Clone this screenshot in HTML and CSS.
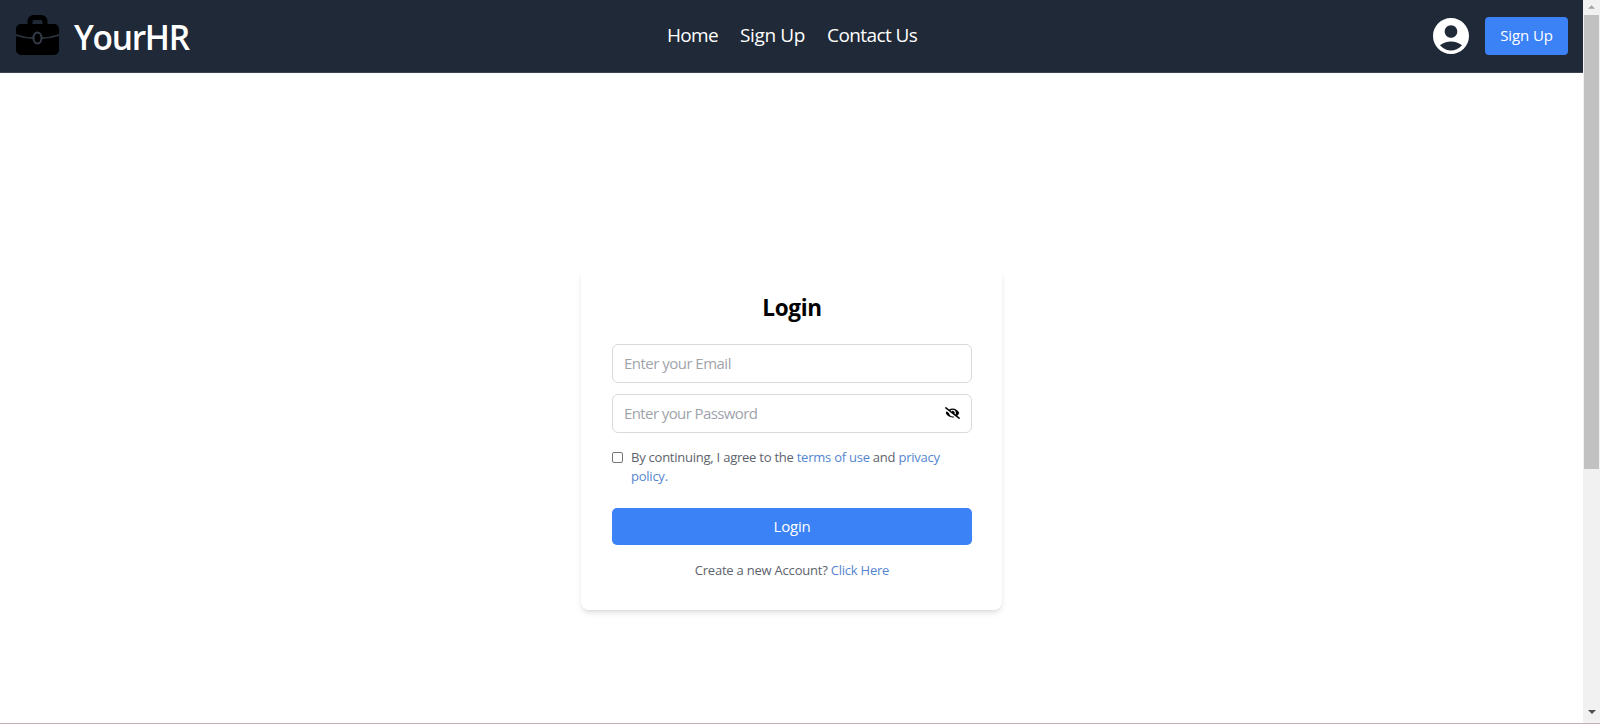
FILE: index.html
```html
<!DOCTYPE html>
<html lang="en">
<head>
<meta charset="utf-8">
<title>YourHR</title>
<link rel="stylesheet" href="styles.css">
</head>
<body>
<div class="page">
  <header class="header">
    <div class="brand">
      <svg class="brand-icon" viewBox="0 0 43 40">
        <path fill="#000" fill-rule="evenodd" d="M11.500 9V6a6 6 0 0 1 6-6h8a6 6 0 0 1 6 6v3H38a5 5 0 0 1 5 5v21a5 5 0 0 1-5 5H5a5 5 0 0 1-5-5V14a5 5 0 0 1 5-5zM16.500 9h10V6.500a1.500 1.500 0 0 0-1.500-1.500h-7a1.500 1.500 0 0 0-1.500 1.500z"/>
        <path fill="none" stroke="#2b333e" stroke-width="1.700" d="M0 20q9 3 17.500 3.200M43 20q-9 3-17.500 3.200"/>
        <ellipse cx="21.500" cy="23" rx="4" ry="5.500" fill="#000" stroke="#343d49" stroke-width="2"/>
      </svg>
      <span class="brand-name">YourHR</span>
    </div>
    <nav class="nav">
      <a class="nav-home">Home</a>
      <a class="nav-signup">Sign Up</a>
      <a class="nav-contact">Contact Us</a>
    </nav>
    <div class="account">
      <svg class="avatar" viewBox="2 2 20 20"><path fill="#fff" d="M12 2C6.480 2 2 6.480 2 12s4.480 10 10 10 10-4.480 10-10S17.520 2 12 2zm0 4c1.930 0 3.500 1.570 3.500 3.500S13.930 13 12 13s-3.500-1.570-3.500-3.500S10.070 6 12 6zm0 14c-2.030 0-4.430-.820-6.140-2.880C7.550 15.800 9.680 15 12 15s4.450.800 6.140 2.120C16.430 19.180 14.030 20 12 20z"/></svg>
      <button class="signup"><span>Sign Up</span></button>
    </div>
  </header>
  <main class="main">
    <form class="card">
      <h2 class="title">Login</h2>
      <div class="field"><span class="placeholder-email">Enter your Email</span></div>
      <div class="field">
        <span class="placeholder-password">Enter your Password</span>
        <svg class="eye" viewBox="0 0 640 512"><path d="M320 400c-75.870 0-137.250-58.710-142.900-133.110L72.200 185.820c-13.790 17.300-26.480 35.590-36.720 55.590a32.350 32.350 0 0 0 0 29.190C89.710 376.410 197.070 448 320 448c26.910 0 52.870-4 77.890-10.460L346 397.390a144.130 144.130 0 0 1-26 2.610zm313.820 58.100l-110.550-85.440a331.250 331.250 0 0 0 81.250-102.070 32.350 32.350 0 0 0 0-29.190C550.290 135.590 442.930 64 320 64a308.150 308.150 0 0 0-147.320 37.700L45.460 3.370A16 16 0 0 0 23 6.180L3.370 31.450A16 16 0 0 0 6.180 53.900l588.360 454.730a16 16 0 0 0 22.460-2.810l19.640-25.270a16 16 0 0 0-2.820-22.450zm-183.720-142l-39.300-30.380A94.750 94.750 0 0 0 416 256a94.760 94.760 0 0 0-121.310-92.210A47.650 47.650 0 0 1 304 192a46.640 46.640 0 0 1-1.540 10l-73.610-56.890A142.310 142.310 0 0 1 320 112a143.920 143.920 0 0 1 144 144c0 21.630-5.290 41.790-13.900 60.110z"/></svg>
      </div>
      <div class="agree">
        <span class="checkbox"></span>
        <p><span class="terms-line">By continuing, I agree to the <a>terms of use</a> and <a>privacy</a></span><br><span class="policy"><a>policy.</a></span></p>
      </div>
      <button class="submit"><span>Login</span></button>
      <p class="create">Create a new Account? <a>Click Here</a></p>
    </form>
  </main>
</div>
<aside class="scrollbar">
  <svg class="arrow" viewBox="0 0 8 4"><path fill="#a3a3a3" d="M0 4 4 0l4 4z"/></svg>
  <div class="thumb"></div>
  <svg class="arrow arrow-down" viewBox="0 0 8 4"><path fill="#505050" d="M0 0h8L4 4z"/></svg>
</aside>
</body>
</html>
```
FILE: styles.css
```css
* { box-sizing: border-box; margin: 0; }
body {
  width: 1600px; height: 724px; display: grid; grid-template-columns: 1583px 17px;
  overflow: hidden; border-bottom: 1px solid #c5adb2; background: #fff;
  font-family: "Open Sans", "Noto Sans", sans-serif; color: #000;
}
.page { display: flex; flex-direction: column; }
.header {
  height: 73px; padding: 0 15px 0 16px; background: #1f2937; color: #fff;
  display: grid; grid-template-columns: 651px 1fr auto; align-items: start;
  border-bottom: 1px solid #3c434d;
}
.brand { display: flex; gap: 15px; padding-top: 15px; }
.brand-icon { width: 43px; height: 40px; }
.brand-name { font-size: 33.500px; font-weight: 600; line-height: 44px; letter-spacing: -1.3px; white-space: nowrap; }
.nav { display: flex; gap: 22px; padding-top: 21px; font-size: 19px; line-height: 28px; white-space: nowrap; letter-spacing: -0.6px; }
.nav-home { letter-spacing: -0.7px; }
.nav-signup { letter-spacing: -0.35px; }
.account { display: flex; gap: 16px; padding-top: 17px; align-items: center; }
.avatar { width: 36px; height: 36px; }
.signup { width: 83px; height: 38px; border: 0; border-radius: 4px; background: #3b82f6; color: #fff; font: 15px/24px "Open Sans", sans-serif; letter-spacing: -0.1px; padding: 0 0 2px; white-space: nowrap; }
.main { flex: 1; display: flex; justify-content: center; align-items: flex-start; padding-top: 195px; }
.card {
  width: 421px; height: 342px; padding: 24px 30px 0 31px; border-radius: 8px; background: #fff;
  box-shadow: 0 4px 6px -1px rgba(0,0,0,.1), 0 2px 4px -2px rgba(0,0,0,.1);
}
.title { height: 52px; font-size: 22.500px; line-height: 32px; font-weight: 700; text-align: center; letter-spacing: -0.3px; }
.field {
  height: 39px; margin-bottom: 11px; padding: 0 11px 1px; border: 1px solid #d9dadd; border-radius: 6px;
  display: flex; justify-content: space-between; align-items: center;
  font-size: 15px; line-height: 24px; color: #a0a4ab; letter-spacing: -0.52px; white-space: nowrap;
}
.placeholder-password { letter-spacing: -0.6px; }
.eye { width: 15px; height: 12px; fill: #000; }
.agree { display: flex; gap: 8px; height: 64px; padding-top: 4px; font-size: 13px; line-height: 19px; color: #5d636d; letter-spacing: -0.24px; white-space: nowrap; }
.checkbox { width: 11px; height: 11px; margin-top: 4px; border: 1px solid #767676; border-radius: 2px; flex: none; }
a { color: inherit; }
.agree a, .create a { color: #5585d0; }
.submit { width: 360px; height: 37px; border: 0; border-radius: 5px; background: #3b82f6; color: #fff; font: 15px/24px "Open Sans", sans-serif; letter-spacing: -0.2px; padding: 0 0 2px; }
.create { margin-top: 15px; text-align: center; font-size: 13px; line-height: 20px; color: #5d636d; letter-spacing: -0.22px; white-space: nowrap; }
.scrollbar { height: 723px; background: #f1f1f1; display: flex; flex-direction: column; align-items: center; padding-top: 5px; }
.arrow { width: 7px; height: 4px; }
.thumb { width: 15px; height: 454px; margin-top: 6px; background: #c1c1c1; }
.arrow-down { width: 8px; margin-top: auto; margin-bottom: 9px; }
```
